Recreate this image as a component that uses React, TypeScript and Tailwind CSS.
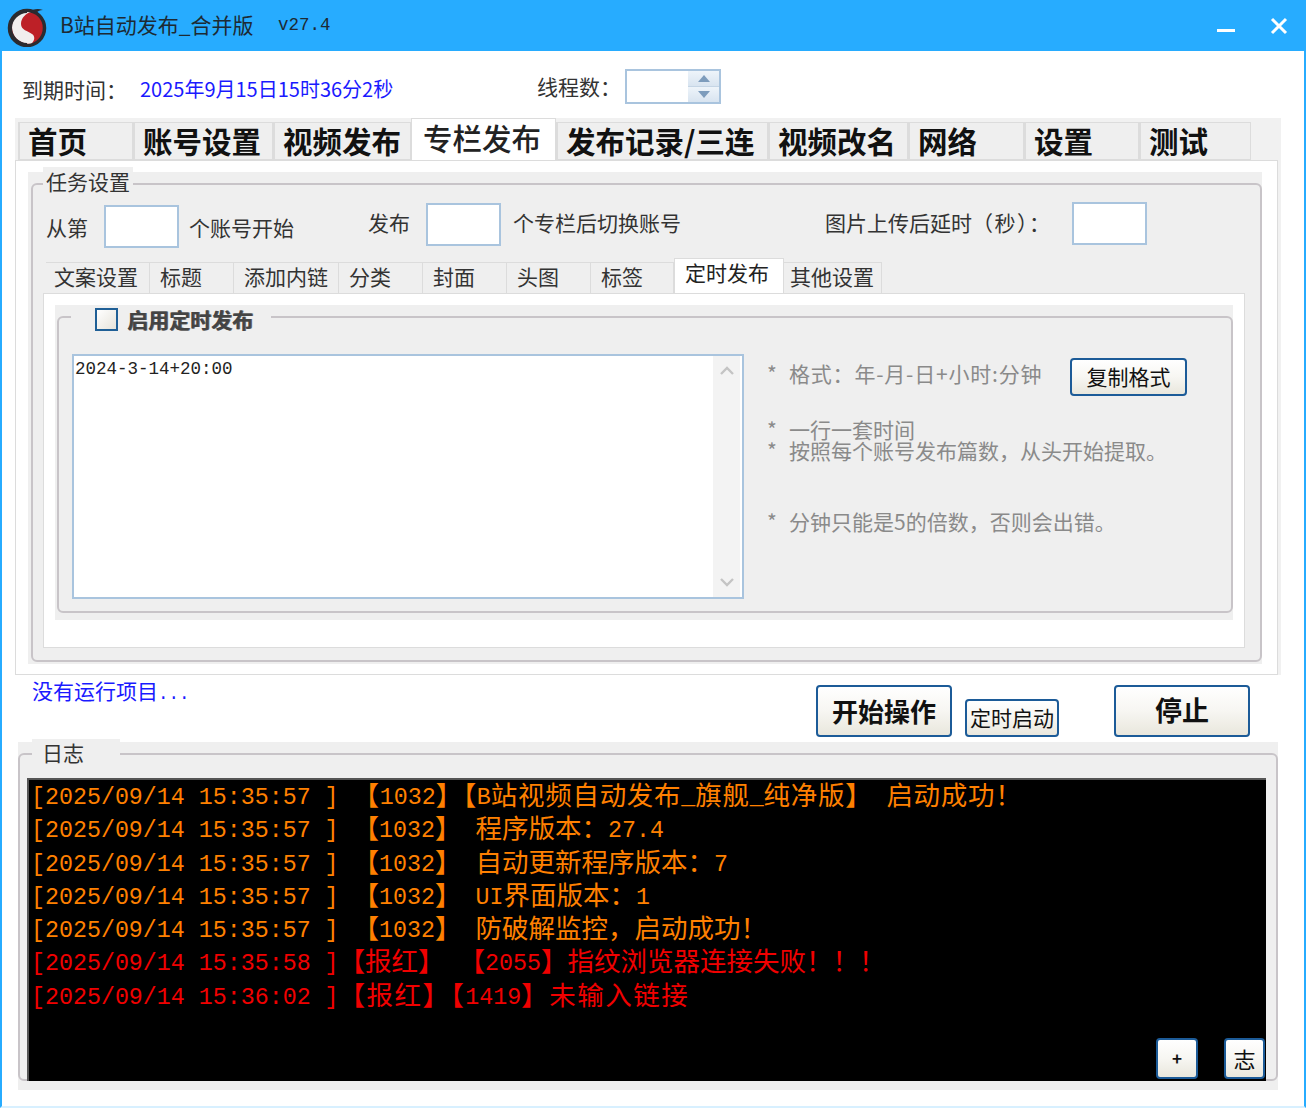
import type { ReactNode } from 'react';

const cjk = '[font-family:"Noto_Sans_CJK_SC","Liberation_Sans",sans-serif]';

const mainTabs = [
  { label: '首页', w: 'w-[115px]' },
  { label: '账号设置', w: 'w-[140px]' },
  { label: '视频发布', w: 'w-[138px]' },
  { label: '专栏发布', w: 'w-[145px]', active: true },
  { label: '发布记录/三连', w: 'w-[212px]' },
  { label: '视频改名', w: 'w-[140px]' },
  { label: '网络', w: 'w-[116px]' },
  { label: '设置', w: 'w-[115px]' },
  { label: '测试', w: 'w-[112px]' },
];

const subTabs = [
  { label: '文案设置', w: 'w-[104px] pl-[8px]' },
  { label: '标题', w: 'w-[84px] pl-[10px]' },
  { label: '添加内链', w: 'w-[105px] pl-[10px]' },
  { label: '分类', w: 'w-[84px] pl-[10px]' },
  { label: '封面', w: 'w-[84px] pl-[10px]' },
  { label: '头图', w: 'w-[84px] pl-[10px]' },
  { label: '标签', w: 'w-[83px] pl-[10px]' },
  { label: '定时发布', w: 'w-[110px] pl-[10px]', active: true },
  { label: '其他设置', w: 'w-[98px] pl-[6px]' },
];

const logs = [
  { text: '[2025/09/14 15:35:57 ] 【1032】【B站视频自动发布_旗舰_纯净版】 启动成功！', red: false, track: 'tracking-[0.7px]' },
  { text: '[2025/09/14 15:35:57 ] 【1032】 程序版本：27.4', red: false, track: '' },
  { text: '[2025/09/14 15:35:57 ] 【1032】 自动更新程序版本：7', red: false, track: '' },
  { text: '[2025/09/14 15:35:57 ] 【1032】 UI界面版本：1', red: false, track: '' },
  { text: '[2025/09/14 15:35:57 ] 【1032】 防破解监控，启动成功！', red: false, track: '' },
  { text: '[2025/09/14 15:35:58 ]【报红】 【2055】指纹浏览器连接失败！！！', red: true, track: '' },
  { text: '[2025/09/14 15:36:02 ]【报红】【1419】未输入链接', red: true, track: 'tracking-[1.5px]' },
];

function Logo() {
  return (
    <svg viewBox="0 0 44 40" className="w-[44px] h-[40px] ml-[6px] mt-[3px] shrink-0">
      <circle cx="21" cy="21" r="17.5" fill="#bd2027" stroke="#2b2b30" strokeWidth="3.5" />
      <path d="M25 5C13 4 6 11 6 20c0 8 5 14 12 16 3 1 6 1 8 0 3-3 3-7 0-9-4-3-11-4-11-10 0-6 5-11 10-12Z" fill="#f1eeee" />
      <path d="M4 21C4 11 12 4 21 4v2C13 6 6 13 6 21s7 15 15 15v2C12 38 4 31 4 21Z" fill="#2b2b30" />
      <path d="M22 5c5-3 10-4 15-2-3 0-5 1-7 3Z" fill="#2b2b30" />
    </svg>
  );
}

function Field({ className }: { className: string }) {
  return <div className={`w-[75px] h-[43px] bg-white border-2 border-[#a9c4de] shrink-0 ${className}`} />;
}

function Btn({ children, className }: { children: ReactNode; className: string }) {
  return (
    <button className={`border-2 border-[#1c5b98] rounded-[4px] bg-gradient-to-b from-white via-[#f7f6f2] to-[#e9e7dd] text-[#111] flex items-center justify-center shrink-0 ${className}`}>
      {children}
    </button>
  );
}

function LogLine({ text, red, track }: { text: string; red: boolean; track: string }) {
  const parts = text.split(/([\u2E80-\uFFFF]+)/);
  return (
    <div className={`h-[33.3px] leading-[27px] whitespace-pre font-['Liberation_Mono',monospace] text-[23.3px] ${red ? 'text-[#f00000]' : 'text-[#ff8000]'}`}>
      {parts.map((p, i) =>
        i % 2 === 1 ? (
          <span key={i} className={`${cjk} text-[26.5px] ${track}`}>{p}</span>
        ) : (
          <span key={i} className="relative -top-[1px]">{p}</span>
        )
      )}
    </div>
  );
}

export default function App() {
  return (
    <div className={`w-[1306px] h-[1108px] bg-white flex flex-col overflow-hidden text-[#222] ${cjk}`}>
      {/* title bar */}
      <div className="h-[51px] bg-[#27acff] flex items-center shrink-0">
        <Logo />
        <span className="ml-[10px] -mt-[2px] text-[21px] text-[#1d2a33] w-[218px] whitespace-nowrap">B站自动发布_合并版</span>
        <span className="font-['Liberation_Mono',monospace] text-[17.5px] text-[#1d2a33]">v27.4</span>
        <div className="ml-auto flex items-center mr-[18px] gap-[35px]">
          <div className="w-[18px] h-[3px] bg-white mt-[9px]" />
          <svg viewBox="0 0 18 18" className="w-[18px] h-[18px]" fill="none" stroke="#fff" strokeWidth="3">
            <path d="M2 2l14 14M16 2L2 16" />
          </svg>
        </div>
      </div>

      <div className="flex-1 border-x-2 border-[#27acff] border-b-2 border-b-[#d8f0ff] flex flex-col relative">
        {/* top row */}
        <div className="h-[67px] flex items-start shrink-0">
          <span className="ml-[20px] mt-[23px] text-[21px] leading-[30px] w-[118px] whitespace-nowrap text-[#333]">到期时间：</span>
          <span className="mt-[23px] text-[20px] leading-[30px] text-[#1a1aff] w-[397px] whitespace-nowrap">2025年9月15日15时36分2秒</span>
          <span className="mt-[20px] text-[21px] leading-[30px] w-[88px] whitespace-nowrap text-[#333]">线程数：</span>
          <div className="mt-[18px] w-[96px] h-[35px] border-2 border-[#a9c4de] bg-white flex justify-end">
            <div className="w-[31px] flex flex-col bg-[#e6eef6]">
              <div className="flex-1 flex items-center justify-center border-b border-[#c5d5e5] bg-gradient-to-b from-[#eef4fa] to-[#d8e4f0]">
                <svg viewBox="0 0 12 7" className="w-[12px] h-[7px]"><path d="M6 0l6 7H0Z" fill="#7d9cbc" /></svg>
              </div>
              <div className="flex-1 flex items-center justify-center bg-gradient-to-b from-[#eef4fa] to-[#d8e4f0]">
                <svg viewBox="0 0 12 7" className="w-[12px] h-[7px]"><path d="M6 7l6-7H0Z" fill="#7d9cbc" /></svg>
              </div>
            </div>
          </div>
        </div>

        {/* main tabs */}
        <div className="ml-[13px] w-[1266px] h-[557px] bg-[#f1f1f1] shrink-0 flex flex-col">
          <div className="h-[42px] flex items-end pl-[3px] shrink-0">
            {mainTabs.map((t) => (
              <div
                key={t.label}
                className={
                  t.active
                    ? `${t.w} h-[42px] bg-white border-t border-x border-[#dcdcdc] pl-[11px] text-[29.5px] leading-[36px] font-medium whitespace-nowrap relative`
                    : `${t.w} h-[38px] bg-[#efefef] border border-[#dcdcdc] border-l-2 pl-[8px] text-[29.5px] leading-[34px] font-bold text-[#111] whitespace-nowrap`
                }
              >
                {t.label}
              </div>
            ))}
          </div>

          <div className="w-[1263px] h-[515px] bg-white border border-[#dcdcdc] pl-[12px] pt-[11px] shrink-0">
            {/* 任务设置 */}
            <div className="w-[1234px] h-[492px] bg-[#efefef] pt-[11px] pl-[3px]">
              <div className="relative w-[1231px] h-[479px] border-2 border-[#c8c4c8] rounded-[6px] pl-[10px]">
                <span className="absolute left-[10px] -top-[18px] px-[3px] bg-[#efefef] text-[21px] leading-[28px] text-[#333]">任务设置</span>
                <div className="h-[76px] flex items-start pl-[3px] text-[21px] leading-[26px] text-[#333]">
                  <span className="mt-[29px] w-[58px]">从第</span>
                  <Field className="mt-[20px]" />
                  <span className="mt-[29px] ml-[10px] w-[179px] whitespace-nowrap">个账号开始</span>
                  <span className="mt-[24px] w-[58px]">发布</span>
                  <Field className="mt-[18px]" />
                  <span className="mt-[24px] ml-[12px] w-[312px] whitespace-nowrap">个专栏后切换账号</span>
                  <span className="mt-[24px] w-[247px] whitespace-nowrap">图片上传后延时<span className="tracking-[1.5px]">（秒）：</span></span>
                  <Field className="mt-[17px]" />
                </div>

                {/* sub tabs */}
                <div className="h-[32px] flex items-end pl-[3px]">
                  {subTabs.map((t) => (
                    <div
                      key={t.label}
                      className={
                        t.active
                          ? `${t.w} h-[35px] bg-white border-t border-x border-[#dcdcdc] text-[21px] leading-[26px] text-[#222] whitespace-nowrap relative z-10`
                          : `${t.w} h-[31px] bg-[#efefef] border-t border-r border-[#dcdcdc] text-[21px] leading-[27px] text-[#333] whitespace-nowrap`
                      }
                    >
                      {t.label}
                    </div>
                  ))}
                </div>

                {/* sub panel */}
                <div className="w-[1202px] h-[355px] bg-white border border-[#dcdcdc] pl-[11px] pt-[11px]">
                  <div className="w-[1178px] h-[315px] bg-[#efefef] pt-[11px] pl-[2px]">
                    <div className="relative w-[1176px] h-[297px] border-2 border-[#c8c4c8] rounded-[6px] flex items-start pl-[13px]">
                      <div className="absolute left-[12px] -top-[12px] w-[200px] h-[26px] bg-[#efefef] flex items-center pl-[24px]">
                        <div className="w-[23px] h-[23px] border-2 border-[#1f5f96] bg-gradient-to-br from-white to-[#e6e3da] shrink-0" />
                        <span className="ml-[9px] text-[21px] font-bold leading-[26px] text-[#444] whitespace-nowrap [text-shadow:1px_0_#666]">启用定时发布</span>
                      </div>

                      <div className="mt-[36px] w-[672px] h-[245px] border-2 border-[#a9c4de] bg-white flex shrink-0">
                        <div className="flex-1 pt-[1px] pl-[1px] font-['Liberation_Mono',monospace] text-[17.5px] leading-[24px] text-[#222]">2024-3-14+20:00</div>
                        <div className="w-[27px] bg-[#f3f3f3] flex flex-col items-center justify-between py-[10px] mr-[2px]">
                          <svg viewBox="0 0 14 9" className="w-[14px] h-[9px]" fill="none" stroke="#c4c4c4" strokeWidth="2.4"><path d="M1 8l6-6 6 6" /></svg>
                          <svg viewBox="0 0 14 9" className="w-[14px] h-[9px]" fill="none" stroke="#c4c4c4" strokeWidth="2.4"><path d="M1 1l6 6 6-6" /></svg>
                        </div>
                      </div>

                      <div className="ml-[23px] mt-[40px] text-[21px] text-[#8a8a8a] w-[420px] flex flex-col">
                        <div className="h-[38px] flex items-start justify-between">
                          <span className="whitespace-pre leading-[30px] tracking-[0.8px]"><span className="inline-block w-[22px]">*</span>格式：年-月-日+小时:分钟</span>
                          <Btn className="w-[117px] h-[38px] text-[21px]">复制格式</Btn>
                        </div>
                        <span className="mt-[21px] h-[21px] leading-[24px] whitespace-pre"><span className="inline-block w-[22px]">*</span>一行一套时间</span>
                        <span className="h-[21px] leading-[24px] whitespace-pre"><span className="inline-block w-[22px]">*</span>按照每个账号发布篇数，从头开始提取。</span>
                        <span className="mt-[50px] h-[21px] leading-[24px] whitespace-pre"><span className="inline-block w-[22px]">*</span>分钟只能是5的倍数，否则会出错。</span>
                      </div>
                    </div>
                  </div>
                </div>
              </div>
            </div>
          </div>
        </div>

        {/* action row */}
        <div className="h-[67px] flex items-start shrink-0">
          <span className="ml-[30px] w-[784px] text-[21px] leading-[26px] mt-[2px] text-[#1a1aff] whitespace-nowrap">
            没有运行项目<span className="font-['Liberation_Mono',monospace] text-[17.5px]">...</span>
          </span>
          <Btn className="mt-[10px] w-[136px] h-[52px] text-[26px] font-bold pb-[2px]">开始操作</Btn>
          <Btn className="mt-[24px] ml-[13px] w-[94px] h-[38px] text-[21px]">定时启动</Btn>
          <Btn className="mt-[10px] ml-[55px] w-[136px] h-[52px] text-[27px] font-bold pb-[2px]">停止</Btn>
        </div>

        {/* log */}
        <div className="ml-[16px] w-[1260px] h-[348px] bg-[#efefef] pt-[11px] shrink-0">
          <div className="relative h-[328px] border-2 border-[#c8c4c8] rounded-[6px] pl-[7px] pr-[10px] pt-[23px]">
            <span className="absolute left-[12px] -top-[16px] w-[88px] pl-[10px] bg-[#efefef] text-[21px] leading-[26px] text-[#333]">日志</span>
            <div className="relative h-[303px] bg-black border-t-2 border-l-2 border-[#555] pl-[2px]">
              {logs.map((l, i) => (
                <LogLine key={i} text={l.text} red={l.red} track={l.track} />
              ))}
              <Btn className="absolute right-[68px] bottom-[2px] w-[42px] h-[41px] text-[17px] font-bold pb-[2px]">+</Btn>
              <Btn className="absolute right-[1px] bottom-[2px] w-[41px] h-[41px] text-[22px]">志</Btn>
            </div>
          </div>
        </div>
      </div>
    </div>
  );
}
